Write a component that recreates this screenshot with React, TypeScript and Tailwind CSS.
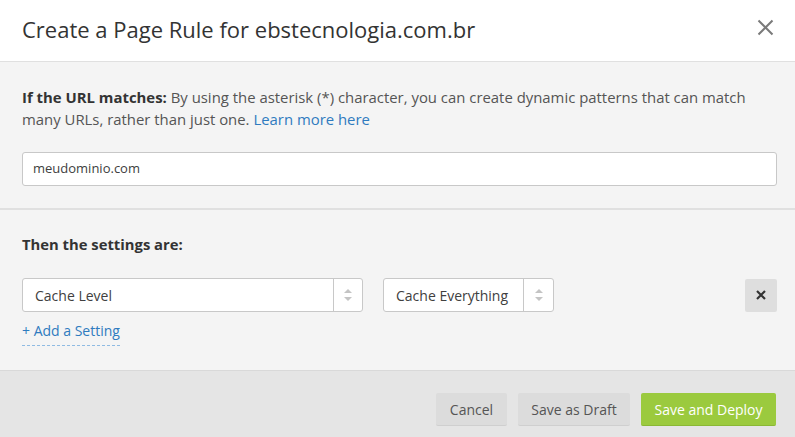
import React from "react";

function Arrows() {
  return (
    <svg width="10" height="14" viewBox="0 0 10 14">
      <path d="M5 1 L9 5 H1 Z" fill="#c4c4c4" />
      <path d="M5 13 L9 9 H1 Z" fill="#c4c4c4" />
    </svg>
  );
}

function Select({ label, width, arrowW }: { label: string; width: string; arrowW: string }) {
  return (
    <div className={`flex h-[34px] ${width} bg-white border border-[#c8c8c8] rounded-[3px]`}>
      <div className="flex-1 flex items-center pl-[12px] text-[14px] text-[#404040]">{label}</div>
      <div className={`${arrowW} border-l border-[#c8c8c8] flex items-center justify-center`}>
        <Arrows />
      </div>
    </div>
  );
}

export default function App() {
  return (
    <div
      className="w-[795px] h-[437px] flex flex-col bg-white overflow-hidden"
      style={{ fontFamily: '"Open Sans", sans-serif' }}
    >
      <div className="h-[62px] shrink-0 flex items-center justify-between pl-[22px] pr-[21px] border-b border-[#e0e0e0]">
        <div className="text-[22px] text-[#333] leading-none -mt-[4px]">Create a Page Rule for ebstecnologia.com.br</div>
        <svg width="17" height="17" viewBox="0 0 17 17" className="-mt-[6px]">
          <path d="M1.5 1.5 L15.5 15.5 M15.5 1.5 L1.5 15.5" stroke="#7a7a7a" strokeWidth="2" />
        </svg>
      </div>

      <div className="bg-[#f4f4f4] pl-[22px] pr-[18px] pt-[24px] pb-[22px] border-b-2 border-[#e0e0e0]">
        <p className="text-[14.9px] leading-[22px] text-[#555] pr-[20px]">
          <b className="text-[#333] font-bold">If the URL matches:</b> By using the asterisk (*) character, you can
          create dynamic patterns that can match many URLs, rather than just one.{" "}
          <span className="text-[#2f7bbf]">Learn more here</span>
        </p>
        <div className="mt-[22px] h-[34px] bg-white border border-[#c8c8c8] rounded-[3px] flex items-center pl-[10px] text-[13px] text-[#404040]">
          meudominio.com
        </div>
      </div>

      <div className="bg-[#f4f4f4] pl-[22px] pr-[18px] pt-[23px] h-[160px] shrink-0">
        <div className="text-[14.8px] leading-[22px] font-bold text-[#333]">Then the settings are:</div>
        <div className="mt-[23px] flex items-center">
          <Select label="Cache Level" width="w-[341px]" arrowW="w-[29px]" />
          <div className="w-[20px]" />
          <Select label="Cache Everything" width="w-[171px]" arrowW="w-[30px]" />
          <div className="flex-1" />
          <div className="w-[32px] h-[33px] bg-[#dedede] rounded-[2px] flex items-center justify-center">
            <svg width="10" height="10" viewBox="0 0 10 10">
              <path d="M1 1 L9 9 M9 1 L1 9" stroke="#333" strokeWidth="2.2" />
            </svg>
          </div>
        </div>
        <div className="mt-[8px] inline-block text-[14px] leading-[22px] text-[#2f7bbf] border-b border-dashed border-[#8fbbe3] pb-[3px]">
          + Add a Setting
        </div>
      </div>

      <div className="flex-1 bg-[#e5e5e5] border-t border-[#d9d9d9] flex justify-end items-start pt-[22px] pr-[19px] gap-[11px]">
        <div className="h-[33px] w-[71px] justify-center bg-[#dcdcdc] rounded-[2px] border-b border-[#cfcfcf] flex items-center text-[14px] text-[#555]">
          Cancel
        </div>
        <div className="h-[33px] w-[112px] justify-center bg-[#dcdcdc] rounded-[2px] border-b border-[#cfcfcf] flex items-center text-[14px] text-[#555]">
          Save as Draft
        </div>
        <div className="h-[33px] w-[135px] justify-center bg-[#9bca3e] rounded-[2px] border-b border-[#8ab834] flex items-center text-[14px] text-white">
          Save and Deploy
        </div>
      </div>
    </div>
  );
}
